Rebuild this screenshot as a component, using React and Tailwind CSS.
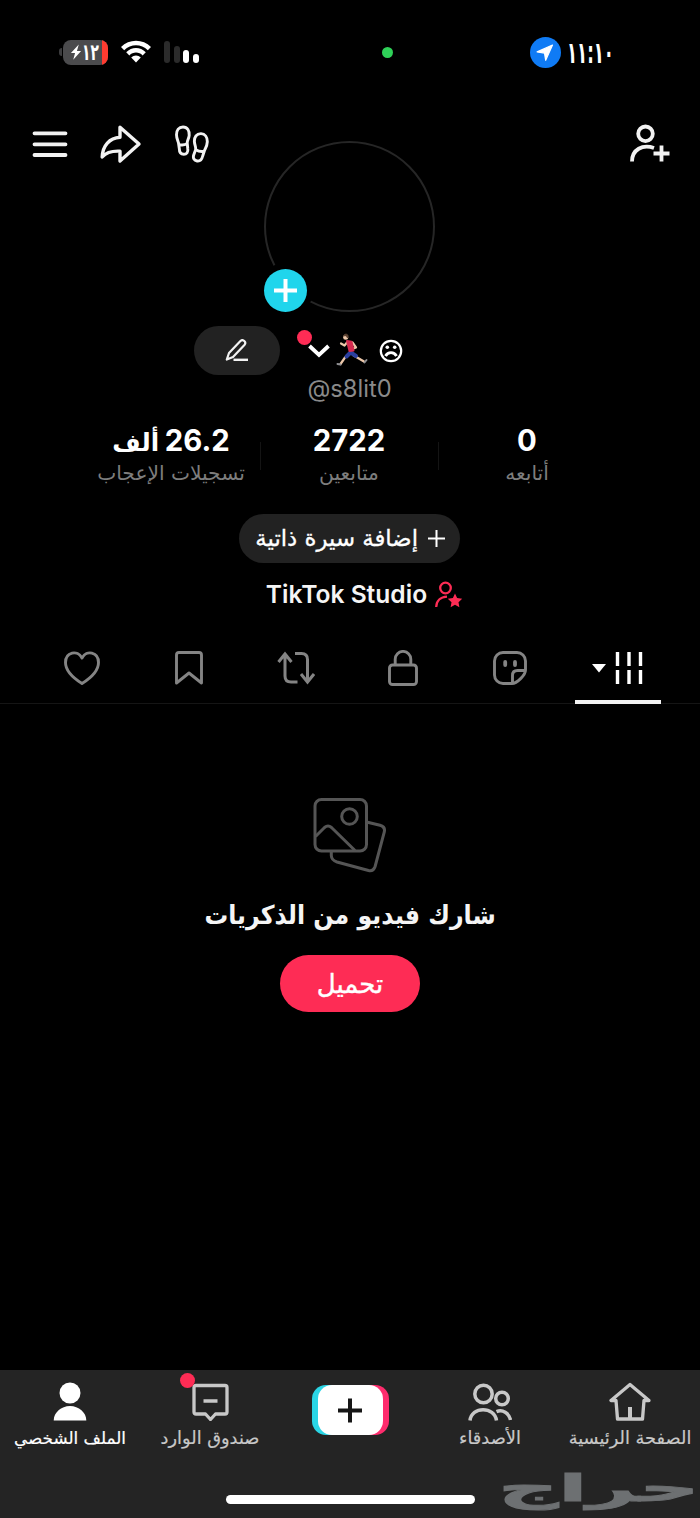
const arabic = "font-['DejaVu_Sans',sans-serif]";

const stats = [
  { value: "26.2", unit: "ألف", label: "تسجيلات الإعجاب" },
  { value: "2722", label: "متابعين" },
  { value: "0", label: "أتابعه" },
];

function StatusBar() {
  return (
    <div className="relative flex h-[104px] shrink-0 items-start">
      <div className="mt-[39px] ml-[59px] flex h-[26px] items-center">
        <span className="mr-px h-2 w-[3px] rounded-l-full bg-[#3c3c3e]" />
        <div className="flex h-[25px] w-[45px] items-center overflow-hidden rounded-lg bg-[#4b4b4d]">
          <svg width="12" height="18" viewBox="0 0 13 18" className="ml-[7px] shrink-0">
            <path d="M9.500 1 1 10h4.500L3.500 17.500 12 8H7.500Z" fill="#fff" />
          </svg>
          <span className={`${arabic} w-[18px] shrink-0 text-[23px] leading-none font-bold text-white`}>
            <span className="inline-block origin-left scale-x-[0.6]">١٢</span>
          </span>
          <span className="ml-auto h-full w-[6px] shrink-0 bg-[#ff3b30]" />
        </div>
      </div>
      <svg width="30" height="24" viewBox="0 0 30 24" className="mt-10 ml-[13px]" fill="#fff">
        <path d="M0 7C8-1.500 22-1.500 30 7l-3.200 3.200C20.200 3.500 9.800 3.500 3.200 10.200Z" />
        <path d="M5.200 12.200c5.400-5.700 14.200-5.700 19.600 0l-3.200 3.200c-3.600-3.800-9.600-3.800-13.200 0Z" />
        <path d="M10.200 17.400c2.700-2.700 6.900-2.700 9.600 0L15 22.600Z" />
      </svg>
      <div className="mt-[41px] ml-[13px] flex items-end gap-[3.5px]">
        <span className="h-[22px] w-1.5 rounded-sm bg-[#2b2b2b]" />
        <span className="h-[17px] w-1.5 rounded-sm bg-[#2b2b2b]" />
        <span className="h-[13px] w-1.5 rounded-sm bg-white" />
        <span className="h-[9px] w-1.5 rounded-sm bg-white" />
      </div>
      <span className="mt-[47px] ml-[183px] size-[11px] rounded-full bg-[#2fd158]" />
      <div className="mt-[37px] ml-[137px] flex items-center">
        <svg width="31" height="31" viewBox="0 0 31 31">
          <circle cx="15.500" cy="15.500" r="15.500" fill="#0f7bf5" />
          <path d="M22.500 8 15.700 23.300l-1.200-7.200-7.400-1.200Z" fill="#fff" stroke="#fff" strokeWidth="1.200" strokeLinejoin="round" />
        </svg>
        <span className={`${arabic} ml-1.5 origin-left scale-x-[0.55] text-[30px] leading-[31px] font-bold text-white`} dir="ltr">
          ١١:١٠
        </span>
      </div>
    </div>
  );
}

function Header() {
  return (
    <div className="flex h-[222px] shrink-0 items-start justify-between pr-[30px] pl-[32px]">
      <div className="flex w-[202px] items-center pt-5 text-[#f2f2f2]">
        <svg width="36" height="28" viewBox="0 0 36 28" stroke="currentColor" strokeWidth="3.800" strokeLinecap="round">
          <path d="M2.500 3.300h31M2.500 14.300h31M2.500 25h31" />
        </svg>
        <svg width="42" height="40" viewBox="0 0 42 40" className="ml-8" fill="none" stroke="currentColor" strokeWidth="3.400" strokeLinejoin="round">
          <path d="M20 3.200 39 20 20 37V27.200C12.500 26.800 6.500 28 2.200 33 2.700 21.500 9.500 14 20 13.200Z" />
        </svg>
        <svg width="34" height="38" viewBox="0 0 34 38" className="ml-[33px]" fill="none" stroke="currentColor" strokeWidth="2.900" strokeLinejoin="round">
          <path d="M8 2c4.500 0 6.600 4 6.200 8.300-.3 3.300-2 5-2 7.700l.6 6c.4 3.200-1.100 5.300-4 5.300-3.200 0-4.500-2.500-4.500-5.700L3.500 18C2.700 15.400 1.500 13.300 1.500 9.700 1.500 5.300 3.800 2 8 2Z" />
          <path d="M3.500 19.500c2.800.9 5.900.7 8.700-.7" />
          <path d="M26 8.600c-4.500-.1-6.800 3.700-6.600 8 .2 3.300 1.500 5.200 1.300 8l-2 5.400c-1 3.200.5 5.600 3.400 6 3 .4 4.800-1.700 5.600-5l1.700-5.300c1.100-2.600 2.800-5 2.900-8.800.1-4.600-2.300-8.200-6.300-8.300Z" />
          <path d="M20.700 24.700c2.600 1.600 5.600 2.200 8.600 1.600" />
        </svg>
      </div>
      <div className="relative mt-[37px] size-[171px] rounded-full border-2 border-[#262626]">
        <span className="absolute top-[120px] left-[-8px] flex size-[55px] items-center justify-center rounded-full bg-black">
          <span className="flex size-[43px] items-center justify-center rounded-full bg-[#20d5ec]">
            <svg width="23" height="23" viewBox="0 0 23 23" stroke="#fff" strokeWidth="4">
              <path d="M11.500 0v23M0 11.500h23" />
            </svg>
          </span>
        </span>
      </div>
      <div className="flex w-[205px] justify-end pt-5">
        <svg width="41" height="40" viewBox="0 0 41 40" fill="none" stroke="#f2f2f2" strokeWidth="3.800">
          <circle cx="16.500" cy="9.800" r="7.300" />
          <path d="M3 37.500C3 25.500 13.500 20 25 24" />
          <path d="M32.500 21.500v16M24.500 29.500h16" />
        </svg>
      </div>
    </div>
  );
}

function Runner() {
  return (
    <svg width="32" height="35" viewBox="0 0 32 35" fill="none" strokeLinecap="round" strokeLinejoin="round">
      <path d="M12.500 21 9 24.500 4.500 31" stroke="#edc8aa" strokeWidth="2.200" />
      <path d="m17 22 5 3 6 3.500" stroke="#edc8aa" strokeWidth="2.200" />
      <path d="m14.500 19.500-4 4M15.500 20l4.500 3" stroke="#2b3f9f" strokeWidth="4" />
      <path d="M4.500 31.500 1.500 31M28.500 29.500l2-2.500" stroke="#8f8f93" strokeWidth="2" />
      <path d="M11 9.500 8.500 12.500 5 10.500" stroke="#edc8aa" strokeWidth="2.200" />
      <path d="m16.500 9.500 3.500 5-4 1.500" stroke="#edc8aa" strokeWidth="2.200" />
      <path d="m11 8 4.500.8 2 8.700-4 .5Z" fill="#d62b50" stroke="#d62b50" strokeWidth="2" />
      <circle cx="9.700" cy="4.200" r="2.500" fill="#edc8aa" />
      <path d="M7.500 2.500C8.500.5 12 .700 12 3l-.5 2-1-2Z" fill="#5a4030" stroke="#5a4030" />
    </svg>
  );
}

function Profile() {
  return (
    <div className="flex shrink-0 flex-col">
      <div className="flex h-[49px] items-center pl-[194px]">
        <button className="flex h-[49px] w-[86px] items-center justify-center rounded-full bg-[#222]">
          <svg width="24" height="23" viewBox="0 0 24 23" fill="none" stroke="#f2f2f2" strokeWidth="2.200" strokeLinejoin="round">
            <path d="M1.800 20.500 4 14 15.200 2.200c1.300-1.300 3-1.200 4.100-.2 1.200 1.100 1.200 2.700.1 4L8 18Z" />
            <path d="M8.500 20.800H23" strokeWidth="2.400" />
          </svg>
        </button>
        <div className="relative ml-7">
          <span className="absolute -top-[14px] -left-[11px] size-[15px] rounded-full bg-[#fe2c55]" />
          <svg width="22" height="14" viewBox="0 0 22 14" fill="none" stroke="#fff" strokeWidth="3.800">
            <path d="m1.500 2 9.500 9 9.500-9" />
          </svg>
        </div>
        <div className="ml-1.5">
          <Runner />
        </div>
        <svg width="24" height="24" viewBox="0 0 24 24" className="ml-[11px]" fill="none" stroke="#fff" strokeWidth="2.200">
          <circle cx="12" cy="12" r="10.200" />
          <path d="M6.500 17c2.500-4.600 8.500-4.600 11 0" strokeWidth="2.800" />
          <circle cx="8.300" cy="8.200" r="1.800" fill="#fff" stroke="none" />
          <circle cx="15.700" cy="8.200" r="1.800" fill="#fff" stroke="none" />
        </svg>
      </div>
      <p className="mt-[-1px] pr-px text-center font-['Inter',sans-serif] text-[23.7px] leading-[30px] text-[#8a8a8a]">@s8lit0</p>
    </div>
  );
}

function Stats() {
  return (
    <div className="mt-5 flex h-[64px] shrink-0 items-center justify-center pr-0.5">
      {stats.map((item, i) => (
        <div key={item.label} className="flex w-[178px] items-center">
          {i > 0 && <span className="-mr-px h-[28px] w-px bg-[#141414]" />}
          <div className="flex flex-1 flex-col items-center">
            <p dir="rtl" className="h-[34px] font-['Inter','DejaVu_Sans',sans-serif] text-[29.3px] leading-[34px] font-bold whitespace-nowrap text-white">
              {item.value}
              {item.unit && <span className="text-[24.5px] leading-none"> {item.unit}</span>}
            </p>
            <p dir="rtl" className={`${arabic} h-[30px] text-[20.2px] leading-[30px] whitespace-nowrap text-[#7d7d7d]`}>
              {item.label}
            </p>
          </div>
        </div>
      ))}
    </div>
  );
}

function Bio() {
  return (
    <div className="flex shrink-0 flex-col items-center">
      <button dir="rtl" className="mt-[26px] mr-px flex h-[49px] w-[221px] items-center justify-center gap-2.5 rounded-full bg-[#222] pl-0.5 text-white">
        <svg width="17" height="17" viewBox="0 0 17 17" stroke="currentColor" strokeWidth="2">
          <path d="M8.500 0v17M0 8.500h17" />
        </svg>
        <span className={`${arabic} w-[162px] text-[22.800px] leading-none whitespace-nowrap [-webkit-text-stroke:0.3px]`}>
          إضافة سيرة ذاتية
        </span>
      </button>
      <div className="mt-4 ml-[29px] flex items-center gap-2">
        <span className="font-['Inter',sans-serif] text-[24.6px] leading-[30px] font-semibold text-[#f5f5f5]">TikTok Studio</span>
        <svg width="28" height="27" viewBox="0 0 28 27" fill="none" stroke="#fe2c55" strokeWidth="2.300">
          <circle cx="10.500" cy="7" r="5.300" />
          <path d="M1.200 26C1.400 20 5.500 16 12 15.600" />
          <path d="m20 12.500 2.100 4.600 5.100.6-3.700 3.500.9 5-4.400-2.500-4.400 2.500.9-5-3.700-3.500 5.100-.6Z" fill="#fe2c55" stroke="none" />
        </svg>
      </div>
    </div>
  );
}

function Tabs() {
  return (
    <div className="mt-[25px] flex h-[70px] shrink-0 border-b border-[#151515] pr-[29px] pb-px pl-7 text-[#848484]">
      <div className="flex flex-1 items-center justify-center">
        <svg width="38" height="34" viewBox="0 0 38 34" fill="none" stroke="currentColor" strokeWidth="2.900" strokeLinejoin="round">
          <path d="M19 32.500C11 27.500 2.500 20.500 2.500 11.500 2.500 1 14.500-1.500 19 7c4.500-8.500 16.500-6 16.500 4.500 0 9-8.500 16-16.500 21Z" />
        </svg>
      </div>
      <div className="flex flex-1 items-center justify-center">
        <svg width="28" height="34" viewBox="0 0 28 34" fill="none" stroke="currentColor" strokeWidth="2.900" strokeLinejoin="round">
          <path d="M1.500 32V4q0-2.500 2.500-2.500h20q2.500 0 2.500 2.500v28L14 22Z" />
        </svg>
      </div>
      <div className="flex flex-1 items-center justify-center">
        <svg width="38" height="34" viewBox="0 0 38 34" fill="none" stroke="currentColor" strokeWidth="3">
          <path d="M1.500 11 8 3l6.500 8M8 4v21q0 6 6 6h6.500M18 2.500h6.500q6 0 6 6v21M24 23l6.500 8 6.500-8" />
        </svg>
      </div>
      <div className="flex flex-1 items-center justify-center">
        <svg width="30" height="36" viewBox="0 0 30 36" fill="none" stroke="currentColor" strokeWidth="2.900">
          <rect x="1.500" y="15" width="27" height="19.500" rx="3" />
          <path d="M7.200 15V9.200a7.800 7.800 0 0 1 15.600 0V15" />
        </svg>
      </div>
      <div className="flex flex-1 items-center justify-center">
        <svg width="34" height="34" viewBox="0 0 34 34" fill="none" stroke="currentColor" strokeWidth="2.900">
          <path d="M19 32.500H10a8.500 8.500 0 0 1-8.500-8.500V10A8.500 8.500 0 0 1 10 1.500h14A8.500 8.500 0 0 1 32.500 10v9c0 5-8.500 13.500-13.500 13.500Z" strokeLinejoin="round" />
          <path d="M19.500 32v-7.500q0-5 5-5h7.500" />
          <path d="M12.200 11v3M22 11v3" strokeWidth="3.800" strokeLinecap="round" />
        </svg>
      </div>
      <div className="relative flex flex-1 items-center justify-center gap-[9px] text-white">
        <svg width="14" height="9" viewBox="0 0 14 9" fill="currentColor">
          <path d="M0 0h14L7 8.500Z" />
        </svg>
        <svg width="28" height="32" viewBox="0 0 28 32" stroke="currentColor" strokeWidth="3.400">
          <path d="M2.500 0v14M2.500 18v14M14 0v14M14 18v14M25.500 0v14M25.500 18v14" />
        </svg>
        <span className="absolute -bottom-[2px] left-[11px] h-1 w-[86px] bg-[#f2f2f2]" />
      </div>
    </div>
  );
}

function EmptyState() {
  return (
    <div className="flex flex-1 flex-col items-center pt-[94px]">
      <svg width="74" height="75" viewBox="0 0 74 75" fill="none" stroke="#555" strokeWidth="3">
        <rect x="2" y="1.500" width="51.500" height="51.500" rx="6.500" />
        <circle cx="36.500" cy="18.500" r="7.800" />
        <path d="m2.500 38.500 9-9q3.500-3 7 0L42 52.500" />
        <path d="m53.500 24 13.500 3.300q5.500 1.500 4.300 6.700l-9.200 34.500q-1.600 5-6.600 4L24 64q-5.500-1.700-5.700-6.500v-4" />
      </svg>
      <h2 dir="rtl" className={`${arabic} mt-[22px] scale-x-[0.91] text-[26px] leading-[40px] font-bold whitespace-nowrap text-[#f5f5f5]`}>
        شارك فيديو من الذكريات
      </h2>
      <button className={`${arabic} mt-[20px] h-[57px] w-[140px] rounded-full bg-[#fe2c55] pt-px text-[26px] leading-none text-white [-webkit-text-stroke:0.4px]`}>
        تحميل
      </button>
    </div>
  );
}

function NavItem({ label, children, className = "text-[#c8c8c8]", labelClass = "text-[17.8px]" }) {
  return (
    <div className={`flex w-[140px] flex-col items-center pt-3 ${className}`}>
      <div className="flex h-[40px] items-center">{children}</div>
      <span dir="rtl" className={`${arabic} ${labelClass} mt-[3px] leading-[26px] whitespace-nowrap [-webkit-text-stroke:0.2px]`}>
        {label}
      </span>
    </div>
  );
}

function BottomNav() {
  return (
    <div className="relative h-[148px] shrink-0 bg-[#242424]">
      <div className="flex">
        <NavItem label="الملف الشخصي" className="text-white" labelClass="text-[16.8px]">
          <svg width="34" height="40" viewBox="0 0 34 40" fill="currentColor">
            <circle cx="17" cy="11" r="10.500" />
            <path d="M.7 38.500c0-8 7.500-14.500 16.300-14.500s16.300 6.500 16.300 14.500Z" />
          </svg>
        </NavItem>
        <NavItem label="صندوق الوارد">
          <div className="relative">
            <span className="absolute -top-[10px] -left-[12px] size-[15px] rounded-full bg-[#fe2c55]" />
            <svg width="37" height="38" viewBox="0 0 37 38" fill="none" stroke="currentColor" strokeWidth="3.300" strokeLinejoin="round">
              <path d="M4 2.500h29q2 0 2 2V29q0 2-2 2h-9.500L18.500 36.500 13.500 31H4q-2 0-2-2V4.500q0-2 2-2Z" />
              <path d="M11.500 18h14" strokeWidth="3.500" />
            </svg>
          </div>
        </NavItem>
        <div className="flex w-[140px] justify-center pt-[15px]">
          <svg width="77" height="50" viewBox="0 0 77 50">
            <rect width="50" height="50" rx="14" fill="#2ad5e5" />
            <rect x="27" width="50" height="50" rx="14" fill="#fe2c6d" />
            <rect x="6" width="65" height="50" rx="14" fill="#fff" />
            <path d="M38 13.500v24M26 25.500h24" stroke="#161616" strokeWidth="4" />
          </svg>
        </div>
        <NavItem label="الأصدقاء">
          <svg width="44" height="40" viewBox="0 0 44 40" fill="none" stroke="currentColor" strokeWidth="3.500">
            <circle cx="15.500" cy="12" r="8.700" />
            <circle cx="34" cy="16.500" r="6.300" />
            <path d="M2 38.500c1.500-14.500 24.500-14.500 26.500 0M28.500 29.700c6-2.600 12.500 1.300 14 8.300" />
          </svg>
        </NavItem>
        <NavItem label="الصفحة الرئيسية">
          <svg width="42" height="40" viewBox="0 0 42 40" fill="none" stroke="currentColor" strokeWidth="3.300" strokeLinejoin="round">
            <path d="M21 2.500 2 18.500h5L8.500 37h25L35 18.500h5Z" />
            <path d="M21 25v12" strokeWidth="4" />
          </svg>
        </NavItem>
      </div>
      <span className="absolute bottom-[14px] left-[226px] h-[9px] w-[249px] rounded-full bg-white" />
      <span
        dir="rtl"
        className={`${arabic} absolute right-px bottom-[11px] origin-right scale-x-[2.2] scale-y-[0.98] text-[38px] leading-none font-bold text-[#6d7072] [-webkit-text-stroke:1px]`}
      >
        حراج
      </span>
    </div>
  );
}

export default function App() {
  return (
    <div className="flex h-[1518px] w-[700px] flex-col overflow-hidden bg-black">
      <StatusBar />
      <Header />
      <Profile />
      <Stats />
      <Bio />
      <Tabs />
      <EmptyState />
      <BottomNav />
    </div>
  );
}
